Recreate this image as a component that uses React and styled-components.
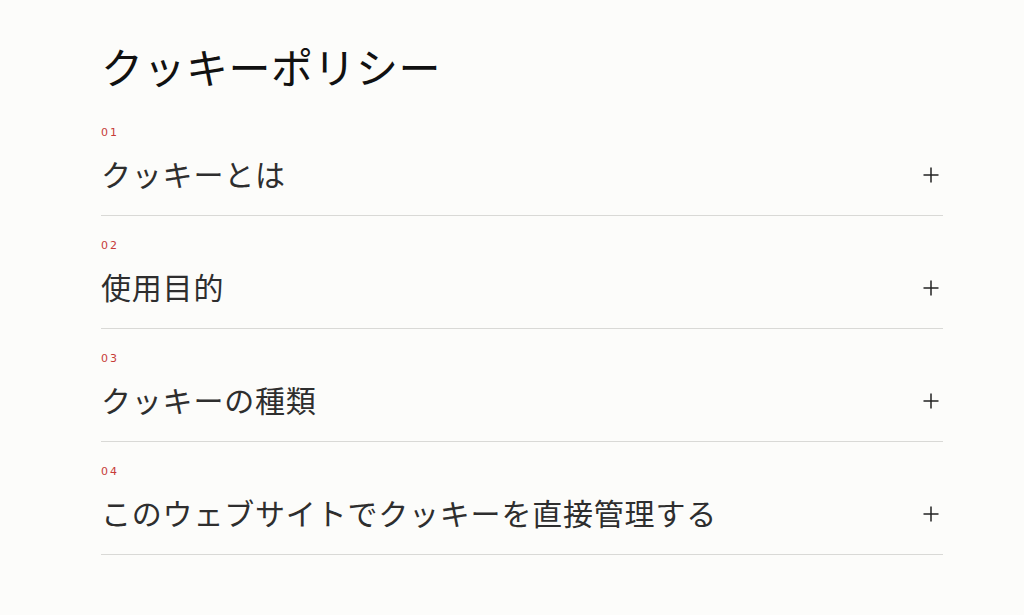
import React from "react";
import styled, { createGlobalStyle } from "styled-components";

const GlobalStyle = createGlobalStyle`
  html, body {
    margin: 0;
    padding: 0;
    background: #fcfcfa;
  }
  body {
    font-family: "Noto Sans CJK JP", "Noto Sans", sans-serif;
  }
`;

/* Page wrapper */
const Page = styled.main`
  width: 842px;
  margin-left: 101px;
  padding-top: 41px;
`;

const Title = styled.h1`
  margin: 0 0 12px 0;
  font-size: 42px;
  line-height: 50px;
  font-weight: 400;
  letter-spacing: 0.5px;
  color: #111;
`;

const List = styled.div`
  display: flex;
  flex-direction: column;
`;

/* One accordion row */
const Row = styled.div`
  display: flex;
  align-items: flex-end;
  justify-content: space-between;
  padding: 24px 0 22px;
  border-bottom: 1px solid #d9d9d6;
`;

const RowText = styled.div`
  display: flex;
  flex-direction: column;
  gap: 14px;
`;

const Num = styled.span`
  font-family: "DejaVu Sans", sans-serif;
  font-size: 11px;
  line-height: 12px;
  letter-spacing: 2px;
  color: #c73b38;
`;

const RowTitle = styled.span`
  font-size: 30px;
  line-height: 40px;
  letter-spacing: 0.8px;
  color: #2e2e2e;
`;

const PlusButton = styled.button`
  background: none;
  border: none;
  padding: 0;
  width: 16px;
  height: 16px;
  margin: 0 4px 10px 0;
  display: flex;
  cursor: pointer;
`;

const Plus = () => (
  <svg width="16" height="16" viewBox="0 0 16 16">
    <path d="M8 0.5v15M0.5 8h15" stroke="#222" strokeWidth="1.5" fill="none" />
  </svg>
);

const items = [
  { num: "01", title: "クッキーとは" },
  { num: "02", title: "使用目的" },
  { num: "03", title: "クッキーの種類" },
  { num: "04", title: "このウェブサイトでクッキーを直接管理する" },
];

const App = () => (
  <>
    <GlobalStyle />
    <Page>
      <Title>クッキーポリシー</Title>
      <List>
        {items.map((it) => (
          <Row key={it.num}>
            <RowText>
              <Num>{it.num}</Num>
              <RowTitle>{it.title}</RowTitle>
            </RowText>
            <PlusButton aria-label="open">
              <Plus />
            </PlusButton>
          </Row>
        ))}
      </List>
    </Page>
  </>
);

export default App;
